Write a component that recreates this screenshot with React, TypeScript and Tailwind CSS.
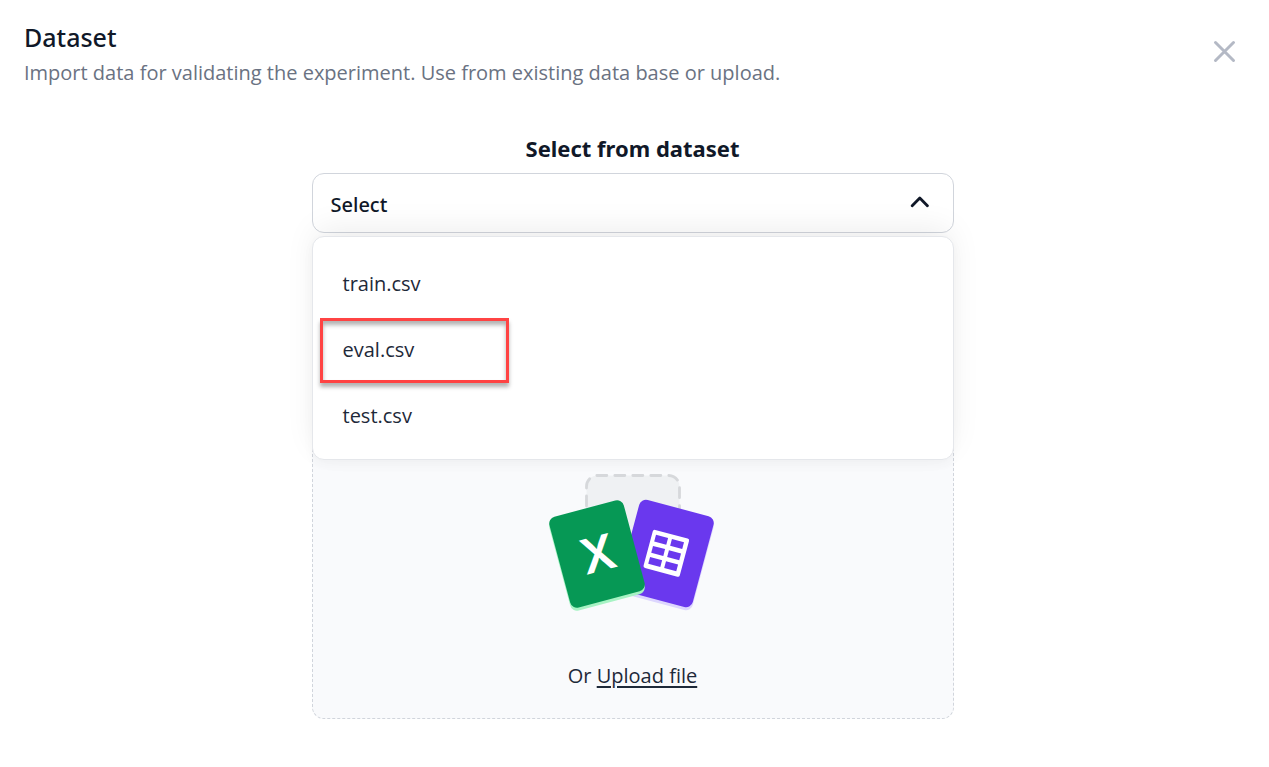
import { useState } from "react";

const files = ["train.csv", "eval.csv", "test.csv"];
const highlighted = "eval.csv";

function CloseIcon() {
  return (
    <svg viewBox="0 0 24 24" className="h-6 w-6" fill="none" stroke="currentColor" strokeWidth="3" strokeLinecap="round" aria-hidden="true">
      <path d="M2.5 2.5 20.5 20.5M20.5 2.5 2.5 20.5" />
    </svg>
  );
}

function ChevronUp() {
  return (
    <svg viewBox="0 0 20 20" className="h-5 w-5" fill="none" stroke="currentColor" strokeWidth="2.8" strokeLinecap="round" strokeLinejoin="round" aria-hidden="true">
      <path d="M3.2 12.8 10.8 5l7.6 7.8" />
    </svg>
  );
}

function FilesIllustration() {
  return (
    <svg viewBox="0 0 176 144" className="h-36 w-44" aria-hidden="true">
      <rect x="41.5" y="5.5" width="93" height="110" rx="11" fill="#eff1f3" />
      <path d="M41.5 40V16.5a11 11 0 0 1 11-11h71a11 11 0 0 1 11 11V40" fill="none" stroke="#d6d8db" strokeWidth="2.8" strokeDasharray="10 8" strokeDashoffset="-4" strokeLinecap="round" />
      <g transform="translate(121 86.5) rotate(15)">
        <rect x="-38.5" y="-47" width="77" height="94" rx="7" fill="#ddd6fe" />
      </g>
      <g transform="translate(121 83.5) rotate(15)">
        <rect x="-38.5" y="-47" width="77" height="94" rx="7" fill="#6a38ee" />
        <rect x="-18.5" y="-20" width="37.5" height="39.5" rx="2" fill="#fff" />
        <g fill="#6a38ee">
          <rect x="-14.5" y="-15.5" width="12.5" height="7" />
          <rect x="2" y="-15.5" width="12.5" height="7" />
          <rect x="-14.5" y="-4" width="12.5" height="7" />
          <rect x="2" y="-4" width="12.5" height="7" />
          <rect x="-14.5" y="7.5" width="12.5" height="7" />
          <rect x="2" y="7.5" width="12.5" height="7" />
        </g>
      </g>
      <g transform="translate(52 87) rotate(-15)">
        <rect x="-38.5" y="-47" width="77" height="94" rx="7" fill="#a7f3c4" />
      </g>
      <g transform="translate(52 84) rotate(-15)">
        <rect x="-38.5" y="-47" width="77" height="94" rx="7" fill="#069855" />
        <text x="1" y="17.5" textAnchor="middle" fill="#fff" className="font-['Inter',sans-serif] text-[48px] font-semibold">X</text>
      </g>
    </svg>
  );
}

export default function App() {
  const [open, setOpen] = useState(true);
  const [selected, setSelected] = useState("Select");

  return (
    <main className="min-h-screen bg-white pt-5 pr-7 pb-12 pl-6 font-['Open_Sans',sans-serif] text-gray-900">
      <header className="flex items-start justify-between">
        <div>
          <h1 className="font-['Noto_Sans',sans-serif] text-[25px] leading-[34px] font-medium">Dataset</h1>
          <p className="text-[20px] leading-[38px] text-gray-500">
            Import data for validating the experiment. Use from existing data base or upload.
          </p>
        </div>
        <button type="button" aria-label="Close" className="mt-5 mr-1 text-[#b4b9c5]">
          <CloseIcon />
        </button>
      </header>

      <section className="mx-auto mt-9 w-full max-w-[642px]">
        <h2 id="dataset-label" className="text-center font-['Noto_Sans',sans-serif] text-[22px] leading-10 font-bold">Select from dataset</h2>
        <div className="relative mt-[5px]">
          <button
            type="button"
            aria-haspopup="listbox"
            aria-expanded={open}
            aria-labelledby="dataset-label dataset-value"
            onClick={() => setOpen(!open)}
            className="flex h-[60px] w-full items-center justify-between rounded-xl border border-gray-300 bg-white pr-6 pl-[18px] font-['Noto_Sans',sans-serif] text-[20px] font-medium"
          >
            <span id="dataset-value" className="pt-1">{selected}</span>
            <ChevronUp />
          </button>
          {open && (
            <ul
              role="listbox"
              aria-labelledby="dataset-label"
              className="absolute inset-x-0 top-full z-10 mt-[3px] rounded-xl border border-gray-200 bg-white py-3 shadow-[0_-10px_32px_-4px_rgba(0,0,0,0.08),0_4px_12px_rgba(0,0,0,0.03)]"
            >
              {files.map((name) => (
                <li
                  key={name}
                  role="option"
                  aria-selected={selected === name}
                  onClick={() => setSelected(name)}
                  className="relative flex h-[66px] cursor-pointer items-center px-[30px] pt-1 text-[20px] text-gray-800"
                >
                  {name}
                  {name === highlighted && (
                    <span className="pointer-events-none absolute top-[3px] left-[7px] h-[65px] w-[189px] border-3 border-[#ff4343] shadow-[0_4px_4px_rgba(0,0,0,0.3),inset_0_4px_4px_rgba(0,0,0,0.3)]" />
                  )}
                </li>
              ))}
            </ul>
          )}
        </div>

        <div className="mt-20 flex flex-col items-center rounded-xl border border-dashed border-gray-300 bg-[#f9fafc] pt-[156px] pb-6">
          <FilesIllustration />
          <p className="mt-11 text-[20px] leading-9 text-gray-800">
            Or <a href="#upload" className="underline decoration-2 underline-offset-3">Upload file</a>
          </p>
        </div>
      </section>
    </main>
  );
}
